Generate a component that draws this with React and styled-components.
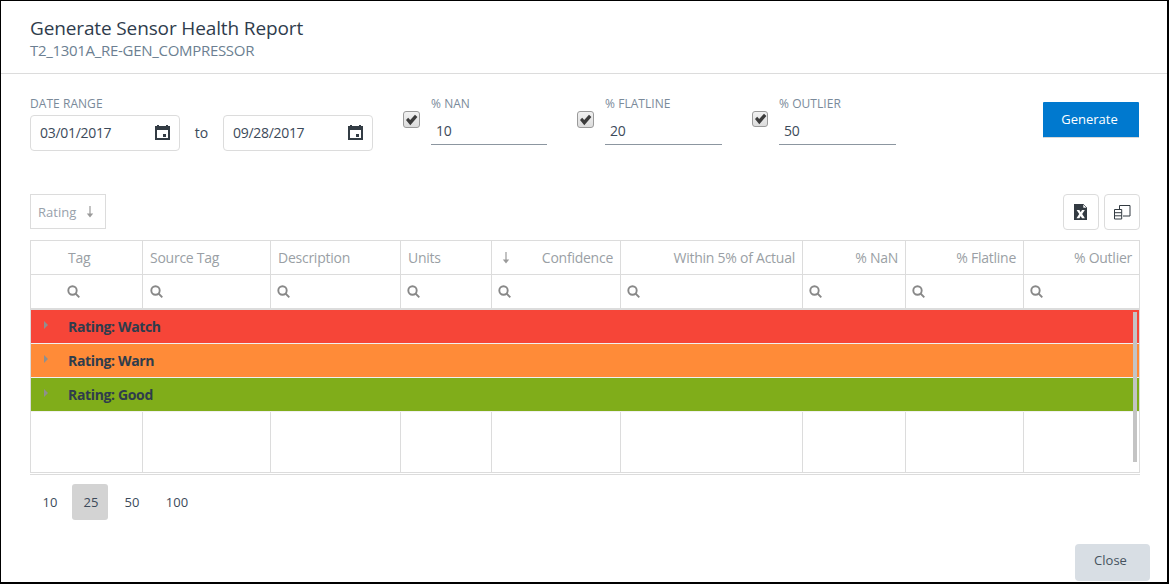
import React from 'react';
import styled, { createGlobalStyle } from 'styled-components';

const Global = createGlobalStyle`
  html, body { margin: 0; padding: 0; background: #fff; }
  body { font-family: "Open Sans", "Noto Sans", "Liberation Sans", sans-serif; }
  * { box-sizing: border-box; }
`;

const Dialog = styled.div`
  width: 1169px; height: 584px; background: #fff; display: flex; flex-direction: column;
  border: 1px solid #000; border-right-width: 2px; border-bottom-width: 2px; overflow: hidden;
`;
const Header = styled.header`
  height: 73px; flex: none; border-bottom: 1px solid #dcdcdc; padding: 14px 0 0 29px;
`;
const Title = styled.h1`
  margin: 0; font-size: 19px; line-height: 27px; font-weight: 400; color: #2f3c4c; letter-spacing: -0.13px;
`;
const Subtitle = styled.div`
  font-size: 15px; line-height: 17px; color: #6c7f92; letter-spacing: -0.3px;
`;
const Form = styled.section`
  height: 120px; flex: none; display: flex; padding: 22px 29px 0; position: relative;
`;
const FieldLabel = styled.div`
  font-size: 12px; line-height: 16px; color: #7a8a9a; letter-spacing: 0.05px; height: 19px;
`;
const DateGroup = styled.div`
  display: flex; flex-direction: column; width: 343px;
`;
const DateRow = styled.div`
  display: flex; align-items: center;
`;
const DateBox = styled.div`
  width: 150px; height: 36px; border: 1px solid #dcdcdc; border-radius: 4px; display: flex; align-items: center;
  justify-content: space-between; padding: 0 8px 1px 9px; font-size: 14px; color: #3c4a5a; letter-spacing: -0.3px;
`;
const To = styled.span`
  width: 43px; text-align: center; font-size: 14px; color: #3c4a5a; padding-bottom: 1px;
`;
const Check = styled.span`
  width: ${p => p.$size}px; height: ${p => p.$size}px; flex: none; margin: 15px 11px 0 0; border: 1px solid #9a9a9a; border-radius: 3px;
  background: linear-gradient(#f1f1f1, #dcdcdc); display: flex; align-items: center; justify-content: center;
`;
const Percent = styled.div`
  display: flex; margin-left: ${p => p.$gap}px;
`;
const PercentField = styled.div`
  width: ${p => p.$w}px; display: flex; flex-direction: column;
`;
const PercentValue = styled.div`
  height: 27px; padding: 3px 0 0 5px; line-height: 20px; font-size: 14px; color: #3c4a5a; border-bottom: 1px solid #8c96a0;
  margin-top: 3px; letter-spacing: -0.3px;
`;
const Generate = styled.button`
  position: absolute; left: 1042px; top: 28px; width: 96px; height: 36px; background: #0079cf; color: #fff; border: 0;
  border-bottom: 1px solid #d8d8d8; border-radius: 1px; font: 400 13px "Open Sans", sans-serif; padding: 0 3px 2px 0;
`;
const Toolbar = styled.div`
  height: 46px; flex: none; display: flex; justify-content: space-between; align-items: flex-start; padding: 0 27px 0 29px;
`;
const SortChip = styled.div`
  width: 76px; height: 35px; border: 1px solid #dcdcdc; display: flex; align-items: center; gap: 10px; padding-left: 7px;
  font-size: 13px; color: #98a1ab;
`;
const ToolButtons = styled.div`
  display: flex; gap: 5px;
`;
const ToolButton = styled.div`
  width: 36px; height: 36px; border: 1px solid #dcdcdc; border-radius: 4px; display: flex; align-items: center; justify-content: center;
`;
const COLS = '112px 128px 130px 91px 129px 182px 103px 118px 115px';
const Table = styled.div`
  position: relative; margin: 0 28px 0 29px; width: 1110px; height: 233px; border: 1px solid #dcdcdc; flex: none;
  display: flex; flex-direction: column;
`;
const Under = styled.div`
  width: 1110px; height: 1px; margin: 1px 0 0 29px; background: #dcdcdc; flex: none;
`;
const HeadRow = styled.div`
  display: grid; grid-template-columns: ${COLS}; height: 34px; flex: none; border-bottom: 1px solid #dcdcdc;
`;
const FilterRow = styled.div`
  display: grid; grid-template-columns: ${COLS}; height: 35px; flex: none; border-bottom: 2px solid #dcdcdc;
`;
const HeadCell = styled.div`
  border-right: 1px solid #dcdcdc; display: flex; align-items: center; padding: 0 7px 0 ${p => p.$pl ?? 7}px;
  justify-content: ${p => (p.$between ? 'space-between' : p.$align)}; font-size: 14px; color: #9a9fa5; letter-spacing: -0.25px;
  &:last-child { border-right: 0; }
`;
const FilterCell = styled.div`
  border-right: 1px solid #dcdcdc; display: flex; align-items: center; padding-left: ${p => p.$pl ?? 6}px;
  &:last-child { border-right: 0; }
`;
const Group = styled.div`
  height: 34px; flex: none; background: ${p => p.$color}; border-bottom: 1px solid #f0f0f0;
  display: flex; align-items: center; padding-left: 37px; position: relative;
  font-size: 14px; font-weight: 700; color: #2f3c4c; letter-spacing: -0.35px;
`;
const Arrow = styled.span`
  position: absolute; left: 13px; top: 11px; width: 0; height: 0;
  border-left: 4px solid #8f8f8f; border-top: 4px solid transparent; border-bottom: 4px solid transparent;
`;
const EmptyRows = styled.div`
  flex: 1; display: grid; grid-template-columns: ${COLS};
`;
const EmptyCell = styled.div`
  border-right: 1px solid #dcdcdc;
  &:last-child { border-right: 0; }
`;
const Scrollbar = styled.div`
  position: absolute; right: 2px; top: 71px; width: 4px; height: 150px; background: #c4c4c4;
`;
const Pager = styled.nav`
  display: flex; flex: none; margin: 9px 0 0 30px; height: 36px; align-items: center; font-size: 13px; color: #3c4a5a;
`;
const PageItem = styled.div`
  height: 36px; width: ${p => p.$w}px; margin-right: ${p => p.$m}px; display: flex; align-items: center; justify-content: center;
  padding-left: 2px; border-radius: 3px; background: ${p => (p.$active ? '#d3d3d3' : 'transparent')};
`;
const Close = styled.button`
  position: absolute; left: 1075px; top: 544px; width: 75px; height: 37px; background: #d8dee4; border: 0; border-radius: 4px;
  color: #46535f; font: 400 13px "Open Sans", sans-serif; padding: 0 4px 5px 0;
`;

const CalendarIcon = () => (
  <svg width="17" height="17" viewBox="0 0 17 17">
    <path d="M1 2h15v14H1z M3 6v8h11V6z" fill="#333c44" fillRule="evenodd" />
    <rect x="3" y="1" width="2" height="2" fill="#333c44" />
    <rect x="12" y="1" width="2" height="2" fill="#333c44" />
    <rect x="9" y="10" width="3" height="3" fill="#333c44" />
  </svg>
);
const CheckMark = () => (
  <svg width="13" height="12" viewBox="0 0 13 12">
    <path d="M1 6 3.2 3.8 5.2 6 10 .8l2.4 2.2L5.3 11.2z" fill="#3c3c3c" />
  </svg>
);
const SearchIcon = () => (
  <svg width="13" height="13" viewBox="0 0 13 13" fill="none" stroke="#888" strokeWidth="1.9">
    <circle cx="5.5" cy="5.5" r="4.2" />
    <path d="M8.5 8.5 12.3 12.3" />
  </svg>
);
const DownArrow = ({ c = '#9a9a9a' }) => (
  <svg width="8" height="12" viewBox="0 0 8 12" fill="none">
    <path d="M4 0v8" stroke={c} strokeWidth="1.2" />
    <path d="M.8 7.5h6.4L4 11.5z" fill={c} />
  </svg>
);
const ExcelIcon = () => (
  <svg width="14" height="16" viewBox="0 0 14 16">
    <path d="M0 0h9l4 4v12H0z" fill="#333b42" />
    <path d="M9 0l4 4H9z" fill="#fff" stroke="#333b42" strokeWidth=".6" />
    <path d="M2.6 6h2.8L6.7 8.2 8 6h2.8L8.2 10l2.7 4.2H8L6.7 11.9 5.4 14.2H2.5L5.2 10z" fill="#fff" />
  </svg>
);
const ExportIcon = () => (
  <svg width="17" height="16" viewBox="0 0 17 16" fill="none" stroke="#333b42" strokeWidth="1">
    <path d="M5.5 5V1.5h10.5v10.500H9" />
    <path d="M.5 5.5h7.200v9.500H.5zM.5 8.700h7.200M.5 11.800h7.200" />
  </svg>
);

const columns = [
  { t: 'Tag', align: 'flex-start', fp: 36, pl: 37 },
  { t: 'Source Tag', align: 'flex-start', fp: 7 },
  { t: 'Description', align: 'flex-start', fp: 6 },
  { t: 'Units', align: 'flex-start', fp: 6, pl: 7 },
  { t: 'Confidence', between: true, fp: 6, pl: 10 },
  { t: 'Within 5% of Actual', align: 'flex-end', fp: 6 },
  { t: '% NaN', align: 'flex-end', fp: 6 },
  { t: '% Flatline', align: 'flex-end', fp: 6 },
  { t: '% Outlier', align: 'flex-end', fp: 6 },
];

const percents = [
  { label: '% NAN', value: '10', w: 116, gap: 30, size: 17 },
  { label: '% FLATLINE', value: '20', w: 117, gap: 30, size: 17 },
  { label: '% OUTLIER', value: '50', w: 117, gap: 30, size: 16 },
];

export default function App() {
  return (
    <>
      <Global />
      <Dialog>
        <Header>
          <Title>Generate Sensor Health Report</Title>
          <Subtitle>T2_1301A_RE-GEN_COMPRESSOR</Subtitle>
        </Header>
        <Form>
          <DateGroup>
            <FieldLabel>DATE RANGE</FieldLabel>
            <DateRow>
              <DateBox>03/01/2017<CalendarIcon /></DateBox>
              <To>to</To>
              <DateBox>09/28/2017<CalendarIcon /></DateBox>
            </DateRow>
          </DateGroup>
          {percents.map(p => (
            <Percent key={p.label} $gap={p.gap}>
              <Check $size={p.size}><CheckMark /></Check>
              <PercentField $w={p.w}>
                <FieldLabel>{p.label}</FieldLabel>
                <PercentValue>{p.value}</PercentValue>
              </PercentField>
            </Percent>
          ))}
          <Generate>Generate</Generate>
        </Form>
        <Toolbar>
          <SortChip>Rating <DownArrow /></SortChip>
          <ToolButtons>
            <ToolButton><ExcelIcon /></ToolButton>
            <ToolButton><ExportIcon /></ToolButton>
          </ToolButtons>
        </Toolbar>
        <Table>
          <HeadRow>
            {columns.map(c => (
              <HeadCell key={c.t} $align={c.align} $between={c.between} $pl={c.pl}>
                {c.between ? <DownArrow /> : null}
                <span>{c.t}</span>
              </HeadCell>
            ))}
          </HeadRow>
          <FilterRow>
            {columns.map(c => (
              <FilterCell key={c.t} $pl={c.fp}><SearchIcon /></FilterCell>
            ))}
          </FilterRow>
          <Group $color="#f64538"><Arrow />Rating: Watch</Group>
          <Group $color="#ff8b38"><Arrow />Rating: Warn</Group>
          <Group $color="#80ad1a"><Arrow />Rating: Good</Group>
          <EmptyRows>
            {columns.map(c => <EmptyCell key={c.t} />)}
          </EmptyRows>
          <Scrollbar />
        </Table>
        <Under />
        <Pager>
          <PageItem $w={36} $m={5}>10</PageItem>
          <PageItem $w={36} $m={5} $active>25</PageItem>
          <PageItem $w={36} $m={5}>50</PageItem>
          <PageItem $w={44} $m={0}>100</PageItem>
        </Pager>
        <Close>Close</Close>
      </Dialog>
    </>
  );
}
